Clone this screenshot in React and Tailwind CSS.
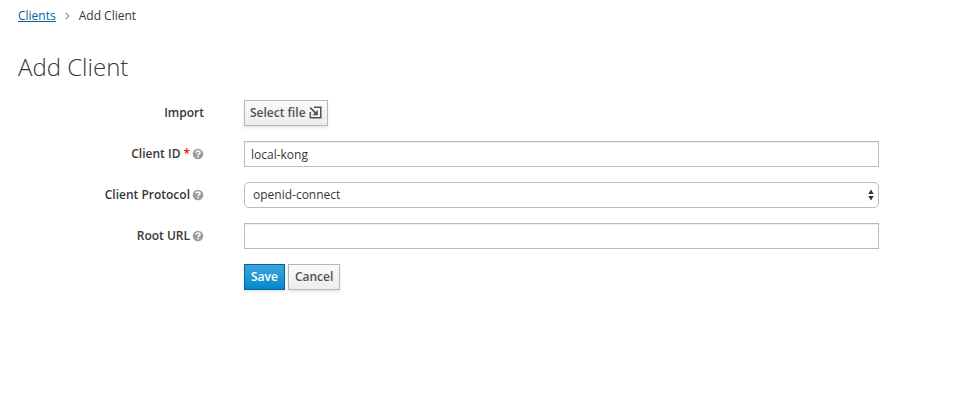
import React from "react";

function HelpIcon() {
  return (
    <svg viewBox="0 0 12 12" className="size-3 shrink-0" aria-hidden="true">
      <circle cx="6" cy="6" r="5.3" fill="#9c9c9c" />
      <path
        d="M4 4.800C4.100 3.600 4.900 3 6 3c1.200 0 2 .6 2 1.600 0 1.300-1.900 1.300-1.900 2.500"
        fill="none"
        stroke="#ffffff"
        strokeWidth="1.500"
      />
      <rect x="5.300" y="7.800" width="1.600" height="1.500" fill="#ffffff" />
    </svg>
  );
}

function ImportIcon() {
  return (
    <svg
      viewBox="0 0 13 13"
      className="mb-0.5 size-[13px] shrink-0"
      fill="none"
      stroke="#4d5258"
      aria-hidden="true"
    >
      <path d="M5 1.300H11.800V11.700H1.300V6" strokeWidth="1.500" />
      <path d="M1.200 1.600L7 7.400" strokeWidth="1.600" />
      <path d="M8.800 4V9.200H3.600Z" fill="#4d5258" stroke="none" />
    </svg>
  );
}

function Field({ id, label, required, help, children }) {
  return (
    <div className="flex items-center gap-10">
      <label
        htmlFor={id}
        className="flex w-[186px] shrink-0 items-center justify-end gap-0.5 font-semibold"
      >
        <span>{label}</span>
        {required && <span className="pl-px text-[#ff0000]">*</span>}
        {help && <HelpIcon />}
      </label>
      <div className="flex min-w-0 flex-1">{children}</div>
    </div>
  );
}

const defaultButton =
  "flex h-[26px] items-center gap-[3px] border border-[#b7b7b7] bg-linear-to-b from-[#fafafa] to-[#ededed] font-semibold text-[#4d5258] shadow-[0_2px_3px_rgba(3,3,3,0.1)]";
const textInput =
  "h-[26px] w-full border border-[#bbbbbb] bg-white px-1.5 pt-px text-[#363636] shadow-[inset_0_1px_1px_rgba(3,3,3,0.075)] outline-none";

export default function App() {
  return (
    <main className="min-h-screen bg-white pt-2 pr-[74px] pl-[18px] font-['Open_Sans',sans-serif] text-[12px] leading-4 text-[#363636]">
      <nav aria-label="Breadcrumb">
        <ol className="flex items-center">
          <li>
            <a href="#clients" className="text-[#00659c] underline">
              Clients
            </a>
          </li>
          <li aria-hidden="true" className="flex w-[23px] justify-center">
            <svg viewBox="0 0 5 8" className="h-2 w-[5px]" fill="none" stroke="#9c9c9c">
              <path d="M0.800 1L3.900 4L0.800 7" strokeWidth="1.200" />
            </svg>
          </li>
          <li aria-current="page">Add Client</li>
        </ol>
      </nav>

      <h1 className="mt-7 text-[24px] leading-[30px] font-light">Add Client</h1>

      <form className="mt-[18px] flex flex-col gap-[15px]" onSubmit={(e) => e.preventDefault()}>
        <Field id="import" label="Import">
          <button id="import" type="button" className={`${defaultButton} px-[5px]`}>
            Select file
            <ImportIcon />
          </button>
        </Field>
        <Field id="clientId" label="Client ID" required help>
          <input id="clientId" type="text" defaultValue="local-kong" className={textInput} />
        </Field>
        <Field id="protocol" label="Client Protocol" help>
          <div className="relative w-full">
            <select
              id="protocol"
              className="block h-[26px] w-full appearance-none rounded-[5px] border border-[#bbbbbb] bg-white px-2 text-[#363636] outline-none"
            >
              <option>openid-connect</option>
              <option>saml</option>
            </select>
            <svg
              viewBox="0 0 6 12"
              className="pointer-events-none absolute top-[7px] right-[5px] h-3 w-1.5"
              fill="#333333"
              aria-hidden="true"
            >
              <path d="M3 0.500L5.700 5H0.300ZM3 11.500L5.700 7H0.300Z" />
            </svg>
          </div>
        </Field>
        <Field id="rootUrl" label="Root URL" help>
          <input id="rootUrl" type="text" className={textInput} />
        </Field>
        <div className="flex gap-[3px] pl-[226px]">
          <button
            type="submit"
            className="h-[26px] border border-[#00659c] bg-linear-to-b from-[#39a5dc] to-[#0088ce] px-1.5 font-semibold text-white shadow-[0_2px_3px_rgba(3,3,3,0.1)]"
          >
            Save
          </button>
          <button type="button" className={`${defaultButton} px-1.5`}>
            Cancel
          </button>
        </div>
      </form>
    </main>
  );
}
